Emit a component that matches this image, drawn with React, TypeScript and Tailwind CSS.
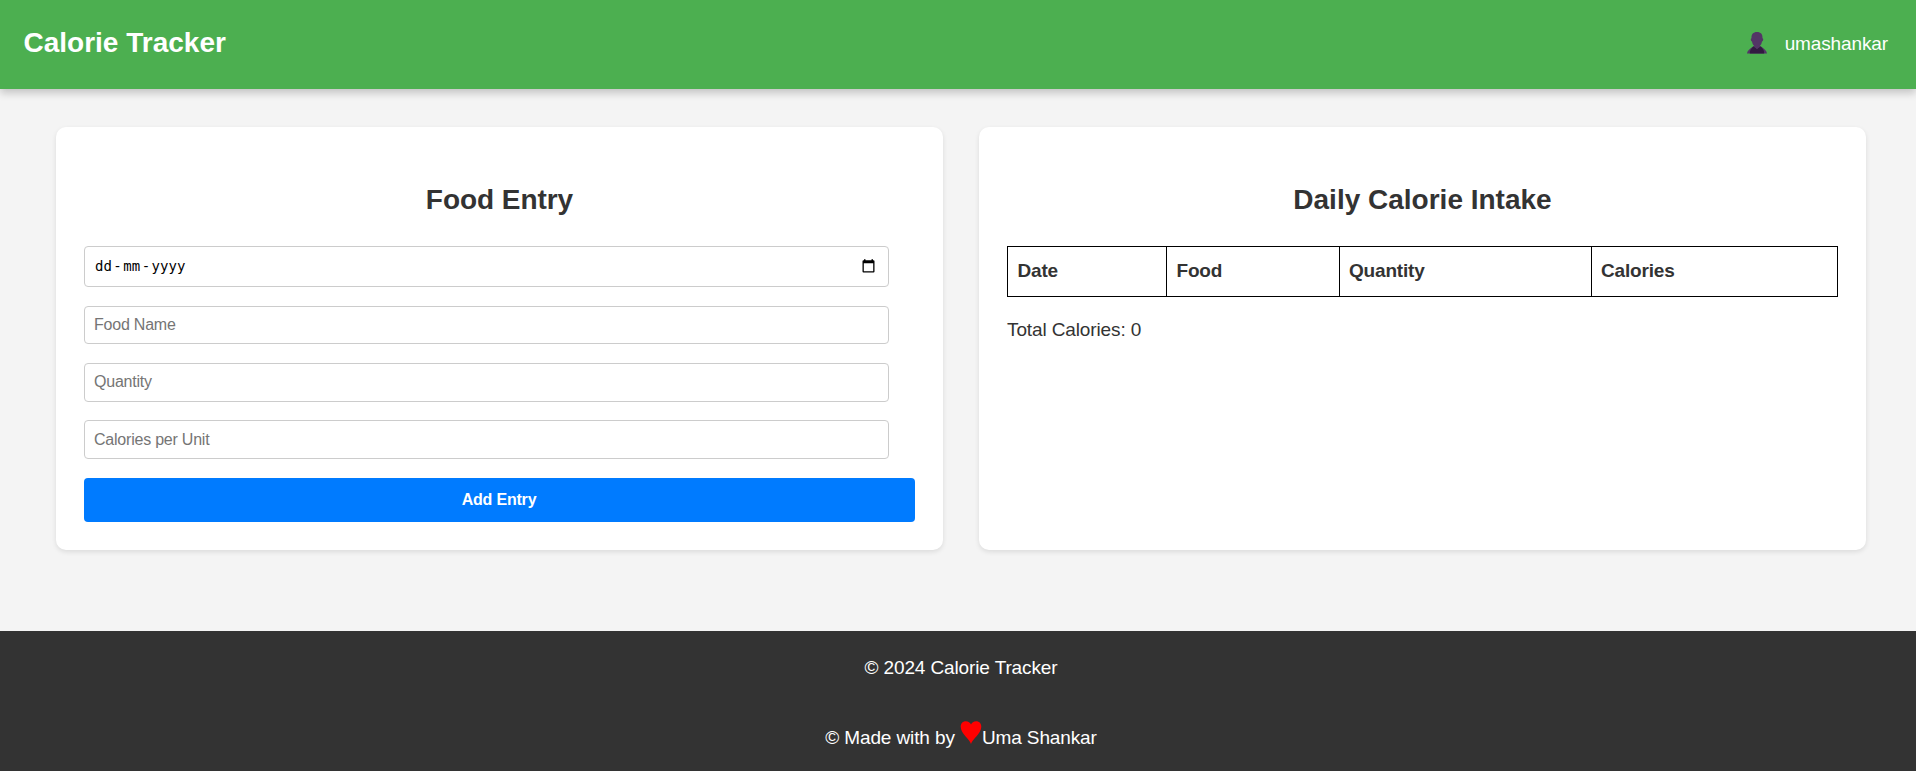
import React from "react";

const field =
  "block w-[805px] rounded border border-[#ccc] bg-white px-[9px] text-[16px] tracking-[-0.22px] text-black placeholder:text-[#757575] outline-none";

function UserIcon() {
  return (
    <svg width="20" height="22" viewBox="0 0 20 22" className="block">
      <path d="M0 21.500C.3 18.500 2.500 17.300 6 14.500H14C17.500 17.300 19.700 18.500 20 21.500Z" fill="#533566" />
      <path d="M2.800 21.500C2.800 18.500 4 16.500 6.500 14.300L10 17L13.500 14.300C16 16.500 17.200 18.500 17.200 21.500Z" fill="#321b41" />
      <path d="M10 0C13.800 0 15.700 2.200 15.500 6.200C16.700 6.600 16.300 9 15 9.600C14.600 11.800 13.900 13 13 13.800V14.800L10 17L7 14.800V13.800C6.100 13 5.400 11.800 5 9.600C3.700 9 3.300 6.600 4.500 6.200C4.300 2.200 6.200 0 10 0Z" fill="#533566" />
    </svg>
  );
}

function CalendarIcon() {
  return (
    <svg width="13" height="14" viewBox="0 0 13 14" className="block">
      <path d="M2 .2h1.500v1h6v-1H11v1h.5q1 0 1 1v10.300q0 1-1 1h-10q-1 0-1-1V2.200q0-1 1-1H2zM1.800 4.300v8h9.400v-8z" fill="#000" fillRule="evenodd" />
    </svg>
  );
}

export default function App() {
  return (
    <div className="flex h-[771px] flex-col overflow-hidden bg-[#f4f4f4] font-['Liberation_Sans',Arial,sans-serif] text-[19px] tracking-[-0.12px] text-[#333]">
      <header className="relative flex h-[89px] shrink-0 items-center justify-between bg-[#4caf50] pl-[23.5px] pr-[28px] text-white shadow-[0_4px_8px_rgba(0,0,0,0.2)]">
        <h1 className="pb-[3px] text-[28px] font-bold leading-8 tracking-normal">Calorie Tracker</h1>
        <div className="flex items-center gap-[18px]">
          <div className="pb-[3px]"><UserIcon /></div>
          <span className="pb-[2px] leading-6">umashankar</span>
        </div>
      </header>

      <main className="flex h-[542px] shrink-0 items-start gap-9 pl-14 pr-[50px] pt-[38px]">
        <section className="h-[423px] flex-1 rounded-[10px] bg-white px-7 pt-[55px] shadow-[0_2px_5px_rgba(0,0,0,0.1)]">
          <h2 className="text-center text-[28px] font-bold leading-9 tracking-[-0.05px]">Food Entry</h2>
          <form className="pt-[28px]" onSubmit={(e) => e.preventDefault()}>
            <div className={`${field} flex h-[41px] items-center justify-between`}>
              <span className="flex pl-[1px] font-['DejaVu_Sans_Mono',monospace] text-[14px] tracking-normal">
                <span>dd</span>
                <span className="mx-[1.5px]">-</span>
                <span>mm</span>
                <span className="mx-[1.5px]">-</span>
                <span>yyyy</span>
              </span>
              <div className="mb-[1px] mr-[4px]"><CalendarIcon /></div>
            </div>
            <input className={`${field} mt-[19px] h-[38px]`} placeholder="Food Name" />
            <input className={`${field} mt-[19px] h-[39px] pb-[2px]`} placeholder="Quantity" />
            <input className={`${field} mt-[18px] h-[39px]`} placeholder="Calories per Unit" />
            <button className="mt-[19px] block h-[44px] w-full rounded bg-[#007bff] pr-[1px] text-[16px] font-bold tracking-[-0.19px] text-white">
              Add Entry
            </button>
          </form>
        </section>

        <section className="h-[423px] flex-1 rounded-[10px] bg-white px-7 pt-[55px] shadow-[0_2px_5px_rgba(0,0,0,0.1)]">
          <h2 className="text-center text-[28px] font-bold leading-9 tracking-normal">Daily Calorie Intake</h2>
          <div className="mt-[28px] grid h-[51px] grid-cols-[159px_173px_252px_1fr] items-stretch border border-black font-bold tracking-[-0.18px]">
            <div className="border-r border-black px-[9.5px] pt-[10px] leading-7">Date</div>
            <div className="border-r border-black px-[9.5px] pt-[10px] leading-7">Food</div>
            <div className="border-r border-black px-[9px] pt-[10px] leading-7">Quantity</div>
            <div className="px-[9px] pt-[10px] leading-7">Calories</div>
          </div>
          <p className="mt-[19px] leading-7">Total Calories: 0</p>
        </section>
      </main>

      <footer className="flex-1 bg-[#333] pl-[6px] text-center text-white">
        <p className="pt-[23px] leading-7">© 2024 Calorie Tracker</p>
        <p className="flex items-end justify-center pt-[42px] leading-7">
          <span className="whitespace-pre">© Made with by </span>
          <svg width="22" height="23" viewBox="0 0 22 23" className="-mt-2 mb-[8px]">
            <path d="M11 23C9.800 18.500 .7 12.500 .7 5.800C.7 2.300 2.800 .2 5.800 .2C8.400 .2 10.200 1.500 11 3.500C11.800 1.500 13.600 .2 16.200 .2C19.200 .2 21.300 2.300 21.300 5.800C21.300 12.500 12.200 18.500 11 23Z" fill="#f00" />
          </svg>
          <span>Uma Shankar</span>
        </p>
      </footer>
    </div>
  );
}
